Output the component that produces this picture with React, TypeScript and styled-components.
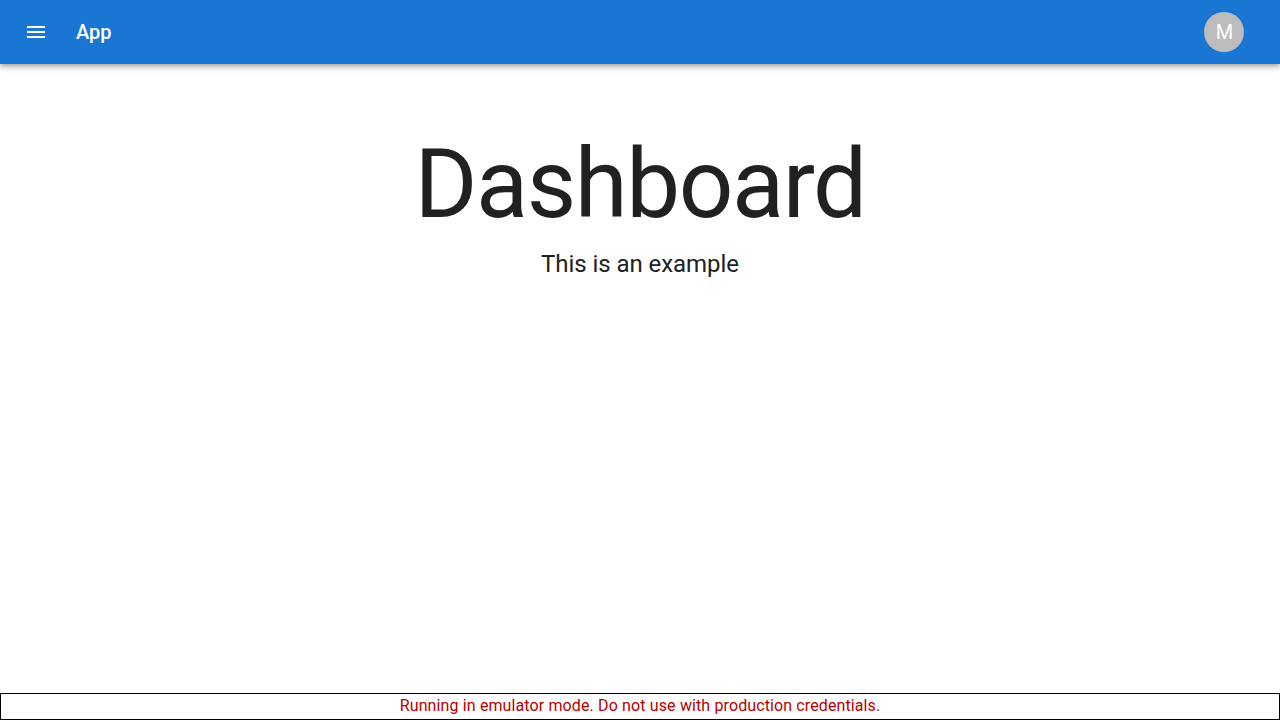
import React from "react";
import styled, { createGlobalStyle } from "styled-components";

const GlobalStyle = createGlobalStyle`
  *, *::before, *::after { box-sizing: border-box; }
  html { -webkit-font-smoothing: antialiased; }
  body {
    margin: 0;
    background: #fff;
    color: #212121;
    font-family: Roboto, "Liberation Sans", sans-serif;
    font-size: 16px;
    line-height: 1.5;
    letter-spacing: 0.12px;
  }
`;

const Page = styled.div`
  min-height: 100vh;
  display: flex;
  flex-direction: column;
`;

const AppBar = styled.header`
  display: flex;
  align-items: center;
  height: 64px;
  padding: 0 24px;
  background: #1976d2;
  color: #fff;
  box-shadow: 0 2px 4px -1px rgba(0, 0, 0, 0.2), 0 4px 5px 0 rgba(0, 0, 0, 0.14),
    0 1px 10px 0 rgba(0, 0, 0, 0.12);
`;

const IconButton = styled.button`
  display: inline-flex;
  margin: 0 16px 0 -12px;
  padding: 12px;
  border: 0;
  border-radius: 50%;
  background: transparent;
  color: inherit;
  cursor: pointer;

  svg {
    width: 24px;
    height: 24px;
    fill: currentColor;
  }
`;

const Title = styled.div`
  flex: 1;
  font-size: 20px;
  font-weight: 500;
  line-height: 1.6;
  letter-spacing: -0.05px;
`;

const Avatar = styled.div`
  display: flex;
  align-items: center;
  justify-content: center;
  width: 40px;
  height: 40px;
  margin-right: 12px;
  padding-left: 1px;
  border-radius: 50%;
  background: #bdbdbd;
  color: #fff;
  font-size: 20px;
  line-height: 1;
  letter-spacing: normal;
`;

const Main = styled.main`
  flex: 1;
  padding-top: 64px;
  text-align: center;
`;

const Heading = styled.h1`
  margin: 0;
  font-size: 96px;
  font-weight: 400;
  line-height: 112px;
  letter-spacing: -1.45px;
`;

const Subheading = styled.h2`
  margin: 8px 0 0;
  font-size: 24px;
  font-weight: 400;
  line-height: 32px;
  letter-spacing: -0.05px;
`;

const Warning = styled.p`
  height: 27px;
  margin: 0;
  border: 1px solid #000;
  background: #fff;
  color: #b50000;
  text-align: center;
  letter-spacing: 0.1px;
  word-spacing: 0.15px;
`;

export default function App() {
  return (
    <Page>
      <GlobalStyle />
      <AppBar>
        <IconButton aria-label="menu">
          <svg viewBox="0 0 24 24">
            <path d="M3 18h18v-2H3v2zm0-5h18v-2H3v2zm0-7v2h18V6H3z" />
          </svg>
        </IconButton>
        <Title>App</Title>
        <Avatar>M</Avatar>
      </AppBar>
      <Main>
        <Heading>Dashboard</Heading>
        <Subheading>This is an example</Subheading>
      </Main>
      <Warning>Running in emulator mode. Do not use with production credentials.</Warning>
    </Page>
  );
}
